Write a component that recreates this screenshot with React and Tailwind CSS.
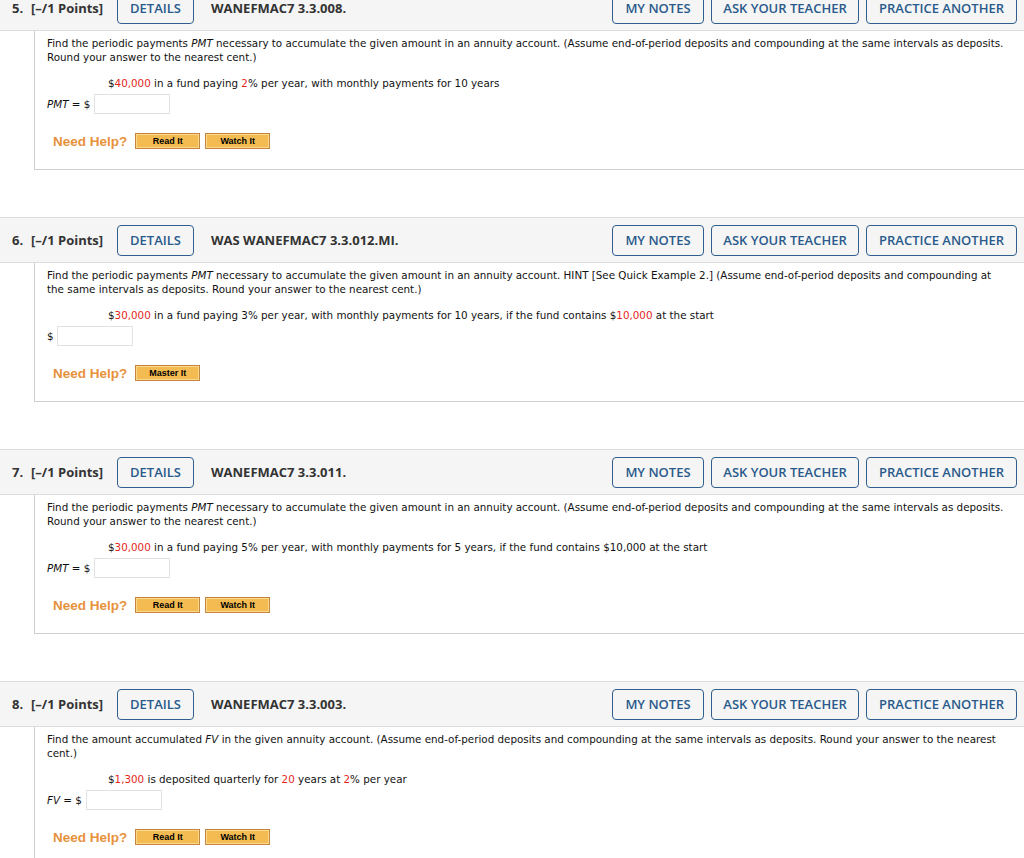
import React from "react";

const RED = "text-[#e5261b]";

function HelpBtn({ label }) {
  return (
    <div className="h-[16px] w-[65px] bg-[#c5843f] p-[1px]">
      <div className="flex h-full w-full items-center justify-center border border-[#fbd98a] bg-[#f3bb52] text-[9px] font-bold leading-none text-black" style={{ fontFamily: "Arial, 'Liberation Sans', sans-serif" }}>
        {label}
      </div>
    </div>
  );
}

function HeaderBtn({ w, children }) {
  return (
    <div className={`flex h-[31px] ${w} items-center justify-center rounded-[4px] border-[1.5px] border-[#2f5e8f] pt-[1px] text-[13px] font-semibold text-[#2a5a8b]`}>
      {children}
    </div>
  );
}

function Question({ num, code, line1, line2, given, inputLabel, inputX, inputW, help }) {
  return (
    <div className="flex flex-col">
      <div className="flex h-[46px] items-center border-y border-[#dcdcdc] bg-[#f5f5f5] text-[13px] text-[#333]" style={{ fontFamily: "'Open Sans', sans-serif" }}>
        <span className="ml-[12px] w-[19px] pt-[2px] font-bold">{num}.</span>
        <span className="w-[86px] pt-[2px] font-bold">[–/1 Points]</span>
        <HeaderBtn w="w-[77px]">DETAILS</HeaderBtn>
        <span className="ml-[17px] pt-[2px] font-bold">{code}</span>
        <div className="ml-auto mr-[7px] flex gap-[7px]">
          <HeaderBtn w="w-[92px]">MY NOTES</HeaderBtn>
          <HeaderBtn w="w-[148px]">ASK YOUR TEACHER</HeaderBtn>
          <HeaderBtn w="w-[151px]">PRACTICE ANOTHER</HeaderBtn>
        </div>
      </div>
      <div className="ml-[34px] h-[139px] w-[1000px] border-b border-l border-[#cfcfcf]">
        <div className="pl-[12px] pt-[5px] text-[10.35px] leading-[14px] text-[#111]" style={{ fontFamily: "Verdana, 'DejaVu Sans', sans-serif" }}>
          <div>{line1}</div>
          <div>{line2}</div>
          <div className="mt-[12px] pl-[61px]">{given}</div>
          <div className="mt-[4px] flex h-[20px] items-center">
            <span>{inputLabel}</span>
            <div className={`h-[20px] ${inputW} border border-[#e2e2e2] bg-white ${inputX}`}></div>
          </div>
          <div className="mt-[19px] flex h-[16px] items-center pl-[6px]">
            <span className="mr-[8px] pt-[1px] text-[13.5px] font-bold text-[#e8913c]" style={{ fontFamily: "Arial, 'Liberation Sans', sans-serif" }}>Need Help?</span>
            <div className="flex gap-[5px]">
              {help.map((h) => (
                <HelpBtn key={h} label={h} />
              ))}
            </div>
          </div>
        </div>
      </div>
      <div className="h-[47px]"></div>
    </div>
  );
}

export default function App() {
  const find = (
    <>
      Find the periodic payments <i>PMT</i> necessary to accumulate the given amount in an annuity account.
    </>
  );
  return (
    <div className="h-[858px] w-[1024px] overflow-hidden bg-white">
      <div className="mt-[-15px]">
        <Question
          num="5"
          code="WANEFMAC7 3.3.008."
          line1={<>{find} (Assume end-of-period deposits and compounding at the same intervals as deposits.</>}
          line2="Round your answer to the nearest cent.)"
          given={<>$<span className={RED}>40,000</span> in a fund paying <span className={RED}>2</span>% per year, with monthly payments for 10 years</>}
          inputLabel={<><i>PMT</i> = $</>}
          inputX="ml-[4px]"
          inputW="w-[76px]"
          help={["Read It", "Watch It"]}
        />
        <Question
          num="6"
          code="WAS WANEFMAC7 3.3.012.MI."
          line1={<>{find} HINT [See Quick Example 2.] (Assume end-of-period deposits and compounding at</>}
          line2="the same intervals as deposits. Round your answer to the nearest cent.)"
          given={<>$<span className={RED}>30,000</span> in a fund paying 3% per year, with monthly payments for 10 years, if the fund contains $<span className={RED}>10,000</span> at the start</>}
          inputLabel={<>$</>}
          inputX="ml-[3px]"
          inputW="w-[76px]"
          help={["Master It"]}
        />
        <Question
          num="7"
          code="WANEFMAC7 3.3.011."
          line1={<>{find} (Assume end-of-period deposits and compounding at the same intervals as deposits.</>}
          line2="Round your answer to the nearest cent.)"
          given={<>$<span className={RED}>30,000</span> in a fund paying 5% per year, with monthly payments for 5 years, if the fund contains $10,000 at the start</>}
          inputLabel={<><i>PMT</i> = $</>}
          inputX="ml-[4px]"
          inputW="w-[76px]"
          help={["Read It", "Watch It"]}
        />
        <Question
          num="8"
          code="WANEFMAC7 3.3.003."
          line1={<>Find the amount accumulated <i>FV</i> in the given annuity account. (Assume end-of-period deposits and compounding at the same intervals as deposits. Round your answer to the nearest</>}
          line2="cent.)"
          given={<>$<span className={RED}>1,300</span> is deposited quarterly for <span className={RED}>20</span> years at <span className={RED}>2</span>% per year</>}
          inputLabel={<><i>FV</i> = $</>}
          inputX="ml-[4px]"
          inputW="w-[76px]"
          help={["Read It", "Watch It"]}
        />
      </div>
    </div>
  );
}
